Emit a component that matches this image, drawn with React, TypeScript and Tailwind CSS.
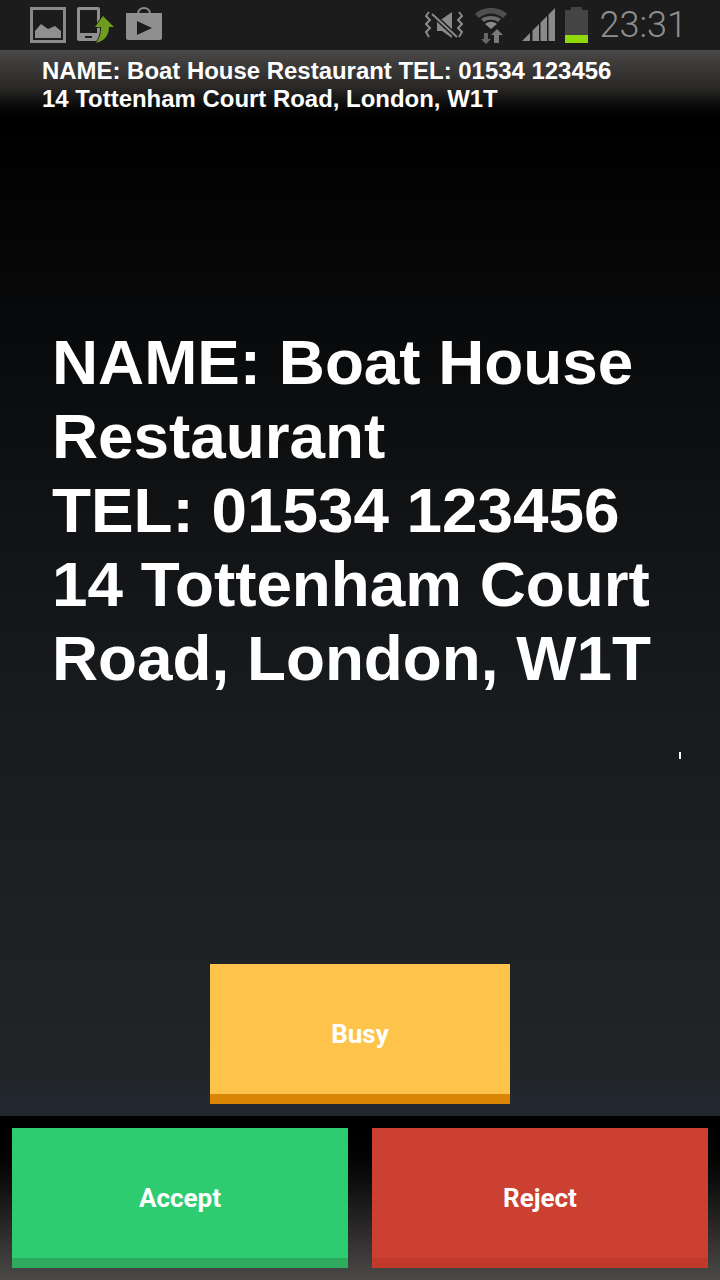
export default function App() {
  return (
    <div className="flex h-[1280px] w-[720px] flex-col overflow-hidden bg-black font-['Liberation_Sans',sans-serif] text-white">
      {/* status bar */}
      <div className="flex h-[50px] items-center justify-between bg-[#1c1c1c] pl-[29px] pr-[33px]">
        <div className="flex items-center">
          <svg width="38" height="38" viewBox="0 0 38 38" className="mr-[10px]">
            <rect x="2.5" y="2.5" width="33" height="33" fill="none" stroke="#8a8a8a" strokeWidth="3" />
            <path d="M6 32V25L12 18L19 23L26 20L32 25V32Z" fill="#8f8f8f" />
          </svg>
          <svg width="37" height="38" viewBox="0 0 37 38" className="mr-[12px]">
            <path fillRule="evenodd" d="M2 1H21Q23 1 23 3V35H2Q0 35 0 33V3Q0 1 2 1ZM3 4V27H20V4ZM8 30V32H15V30Z" fill="#8f8f8f" />
            <path d="M26 10L37 21H32C32 30 27 35 19 37C23 32 24 27 24 21H18Z" fill="#6f9c1d" stroke="#1c1c1c" strokeWidth="1.5" paintOrder="stroke" />
          </svg>
          <svg width="36" height="38" viewBox="0 0 36 38">
            <path d="M12 8C12 0 24 0 24 8" fill="none" stroke="#8f8f8f" strokeWidth="2" />
            <path fillRule="evenodd" d="M0 7H36V32Q36 34 34 34H2Q0 34 0 32ZM11 15V29L26 22Z" fill="#8f8f8f" />
          </svg>
        </div>
        <div className="flex items-center">
          <svg width="38" height="30" viewBox="0 0 38 30" className="mr-[11px]">
            <path d="M12 9H17L27 2V28L17 21H12Z" fill="#8a8a8a" />
            <path d="M6 3L33 28" stroke="#1c1c1c" strokeWidth="5" />
            <path d="M7 4L32 27" stroke="#8a8a8a" strokeWidth="2" />
            <path d="M4 2L1 6L5 10L1 14L5 18L1 22L4 27M34 2L37 6L33 10L37 14L33 18L37 22L34 27" fill="none" stroke="#8a8a8a" strokeWidth="2" />
          </svg>
          <svg width="34" height="38" viewBox="0 0 34 38" className="mr-[14px]">
            <path d="M1 8C9 0 25 0 33 8L29 12C22 6 12 6 5 12Z" fill="#4f4f4f" />
            <path d="M7 13C12 9 22 9 27 13L24 16C20 13 14 13 10 16Z" fill="#6a6a6a" />
            <path d="M11 18C15 15 19 15 23 18L17 23Z" fill="#8a8a8a" />
            <path d="M10 27V33H7L12 38L17 33H14V27Z" fill="#666666" />
            <path d="M23 23L17 29H20V37H25V29H29Z" fill="#7a7a7a" />
          </svg>
          <svg width="33" height="36" viewBox="0 0 33 36" className="mr-[10px]">
            <path d="M0 34L8 26V34Z M10.500 34V23.500L17 17V34Z M18.500 34V15.500L25 9V34Z M26.500 34V7.500L33 1V34Z" fill="#8a8a8a" />
          </svg>
          <div className="mr-[12px] flex h-[36px] w-[23px] flex-col items-center">
            <div className="h-[3px] w-[11px] bg-[#444]" />
            <div className="flex w-full flex-1 flex-col justify-end bg-[#444]">
              <div className="h-[8px] bg-[#8fd80a]" />
            </div>
          </div>
          <span className="font-['Roboto',sans-serif] text-[36px] font-light leading-none text-[#8f8f8f]">23:31</span>
        </div>
      </div>

      {/* ticker */}
      <div className="h-[75px] bg-gradient-to-b from-[#4a4847] via-[#2a2928] via-50% to-black pl-[42px] pt-[7px] text-[23.95px] font-bold leading-[28px]">
        <p>NAME: Boat House Restaurant TEL: 01534 123456</p>
        <p>14 Tottenham Court Road, London, W1T</p>
      </div>

      {/* caller details + busy */}
      <div className="relative flex flex-1 flex-col bg-[linear-gradient(to_bottom,#000_0%,#181b1e_58%,#212528_96%,#22262e_98%)]">
        <div className="mt-[200px] px-[52px] text-[63.8px] font-bold leading-[74px]">
          <p>NAME: Boat House Restaurant</p>
          <p>TEL: 01534 123456</p>
          <p>14 Tottenham Court Road, London, W1T</p>
        </div>
        <div className="absolute left-[679px] top-[627px] h-[7px] w-[2px] bg-white" />
        <button className="mx-auto mb-[12px] mt-auto flex h-[140px] w-[300px] items-center justify-center border-b-[10px] border-[#d98506] bg-[#fec34b] pt-[10px] font-['Roboto',sans-serif] text-[26px] font-bold">
          Busy
        </button>
      </div>

      {/* accept / reject */}
      <div className="flex h-[164px] gap-[24px] bg-gradient-to-b from-black to-[#4c4a49] p-[12px]">
        <button className="flex h-[140px] flex-1 items-center justify-center border-b-[10px] border-[#2eab5f] bg-[#2ecc71] pt-[10px] font-['Roboto',sans-serif] text-[26px] font-bold">
          Accept
        </button>
        <button className="flex h-[140px] flex-1 items-center justify-center border-b-[10px] border-[#c0392b] bg-[#cb4030] pt-[10px] font-['Roboto',sans-serif] text-[26px] font-bold">
          Reject
        </button>
      </div>
    </div>
  );
}
